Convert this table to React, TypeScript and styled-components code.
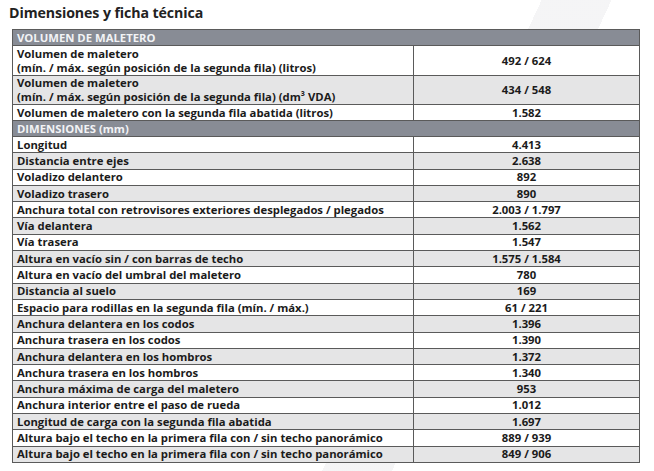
import React from "react";
import styled, { createGlobalStyle } from "styled-components";

const Global = createGlobalStyle`
  html, body { margin: 0; padding: 0; background: #ffffff; }
  body { font-family: "Open Sans", "Liberation Sans", sans-serif; color: #1b1b1b; }
`;

const Page = styled.div`
  width: 654px;
  height: 471px;
  box-sizing: border-box;
  padding: 4px 15px 0 12px;
  overflow: hidden;
  background:
    linear-gradient(115deg, transparent 0 62%, rgba(238,238,240,0.6) 62% 70%, transparent 70% 100%),
    #ffffff;
`;

const Title = styled.h1`
  margin: 0 0 7px -3px;
  font-size: 14.2px;
  line-height: 18px;
  font-weight: 700;
  letter-spacing: -0.1px;
  color: #222;
`;

const Table = styled.table`
  width: 627px;
  border-collapse: collapse;
  table-layout: fixed;
  font-size: 11.3px;
  font-weight: 700;
`;

const HeadCell = styled.th`
  background: #888c95;
  color: #f2f3f5;
  text-align: left;
  font-weight: 700;
  padding: 0 4px;
  height: 15px;
  line-height: 14px;
  border: 1px solid #5a5a5a;
`;

const Row = styled.tr<{ $shade: boolean }>`
  background: ${(p) => (p.$shade ? "#e5e5e6" : "#ffffff")};
`;

const Label = styled.td<{ $h: number }>`
  padding: 0 4px;
  height: ${(p) => p.$h}px;
  line-height: 14px;
  border: 1px solid #5a5a5a;
  white-space: nowrap;
  overflow: hidden;
`;

const Value = styled.td<{ $h: number }>`
  padding: 0 4px;
  height: ${(p) => p.$h}px;
  line-height: 14px;
  border: 1px solid #5a5a5a;
  text-align: center;
`;

type R = { label: React.ReactNode; value: string; h?: number };

const volumen: R[] = [
  {
    label: (
      <>
        Volumen de maletero
        <br />
        (mín. / máx. según posición de la segunda fila) (litros)
      </>
    ),
    value: "492 / 624",
    h: 29,
  },
  {
    label: (
      <>
        Volumen de maletero
        <br />
        (mín. / máx. según posición de la segunda fila) (dm³ VDA)
      </>
    ),
    value: "434 / 548",
    h: 28,
  },
  { label: "Volumen de maletero con la segunda fila abatida (litros)", value: "1.582", h: 15 },
];

const dims: R[] = [
  { label: "Longitud", value: "4.413" },
  { label: "Distancia entre ejes", value: "2.638" },
  { label: "Voladizo delantero", value: "892" },
  { label: "Voladizo trasero", value: "890" },
  { label: "Anchura total con retrovisores exteriores desplegados / plegados", value: "2.003 / 1.797" },
  { label: "Vía delantera", value: "1.562" },
  { label: "Vía trasera", value: "1.547" },
  { label: "Altura en vacío sin / con barras de techo", value: "1.575 / 1.584" },
  { label: "Altura en vacío del umbral del maletero", value: "780" },
  { label: "Distancia al suelo", value: "169" },
  { label: "Espacio para rodillas en la segunda fila (mín. / máx.)", value: "61 / 221" },
  { label: "Anchura delantera en los codos", value: "1.396" },
  { label: "Anchura trasera en los codos", value: "1.390" },
  { label: "Anchura delantera en los hombros", value: "1.372" },
  { label: "Anchura trasera en los hombros", value: "1.340" },
  { label: "Anchura máxima de carga del maletero", value: "953" },
  { label: "Anchura interior entre el paso de rueda", value: "1.012" },
  { label: "Longitud de carga con la segunda fila abatida", value: "1.697" },
  { label: "Altura bajo el techo en la primera fila con / sin techo panorámico", value: "889 / 939" },
  { label: "Altura bajo el techo en la primera fila con / sin techo panorámico", value: "849 / 906" },
];

const Section = ({ title, rows }: { title: string; rows: R[] }) => (
  <>
    <tr>
      <HeadCell colSpan={2}>{title}</HeadCell>
    </tr>
    {rows.map((r, i) => (
      <Row key={i} $shade={i % 2 === 1}>
        <Label $h={r.h ?? 15.3}>{r.label}</Label>
        <Value $h={r.h ?? 15.3}>{r.value}</Value>
      </Row>
    ))}
  </>
);

export default function App() {
  return (
    <Page>
      <Global />
      <Title>Dimensiones y ficha técnica</Title>
      <Table>
        <colgroup>
          <col style={{ width: 401 }} />
          <col style={{ width: 226 }} />
        </colgroup>
        <tbody>
          <Section title="VOLUMEN DE MALETERO" rows={volumen} />
          <Section title="DIMENSIONES (mm)" rows={dims} />
        </tbody>
      </Table>
    </Page>
  );
}
